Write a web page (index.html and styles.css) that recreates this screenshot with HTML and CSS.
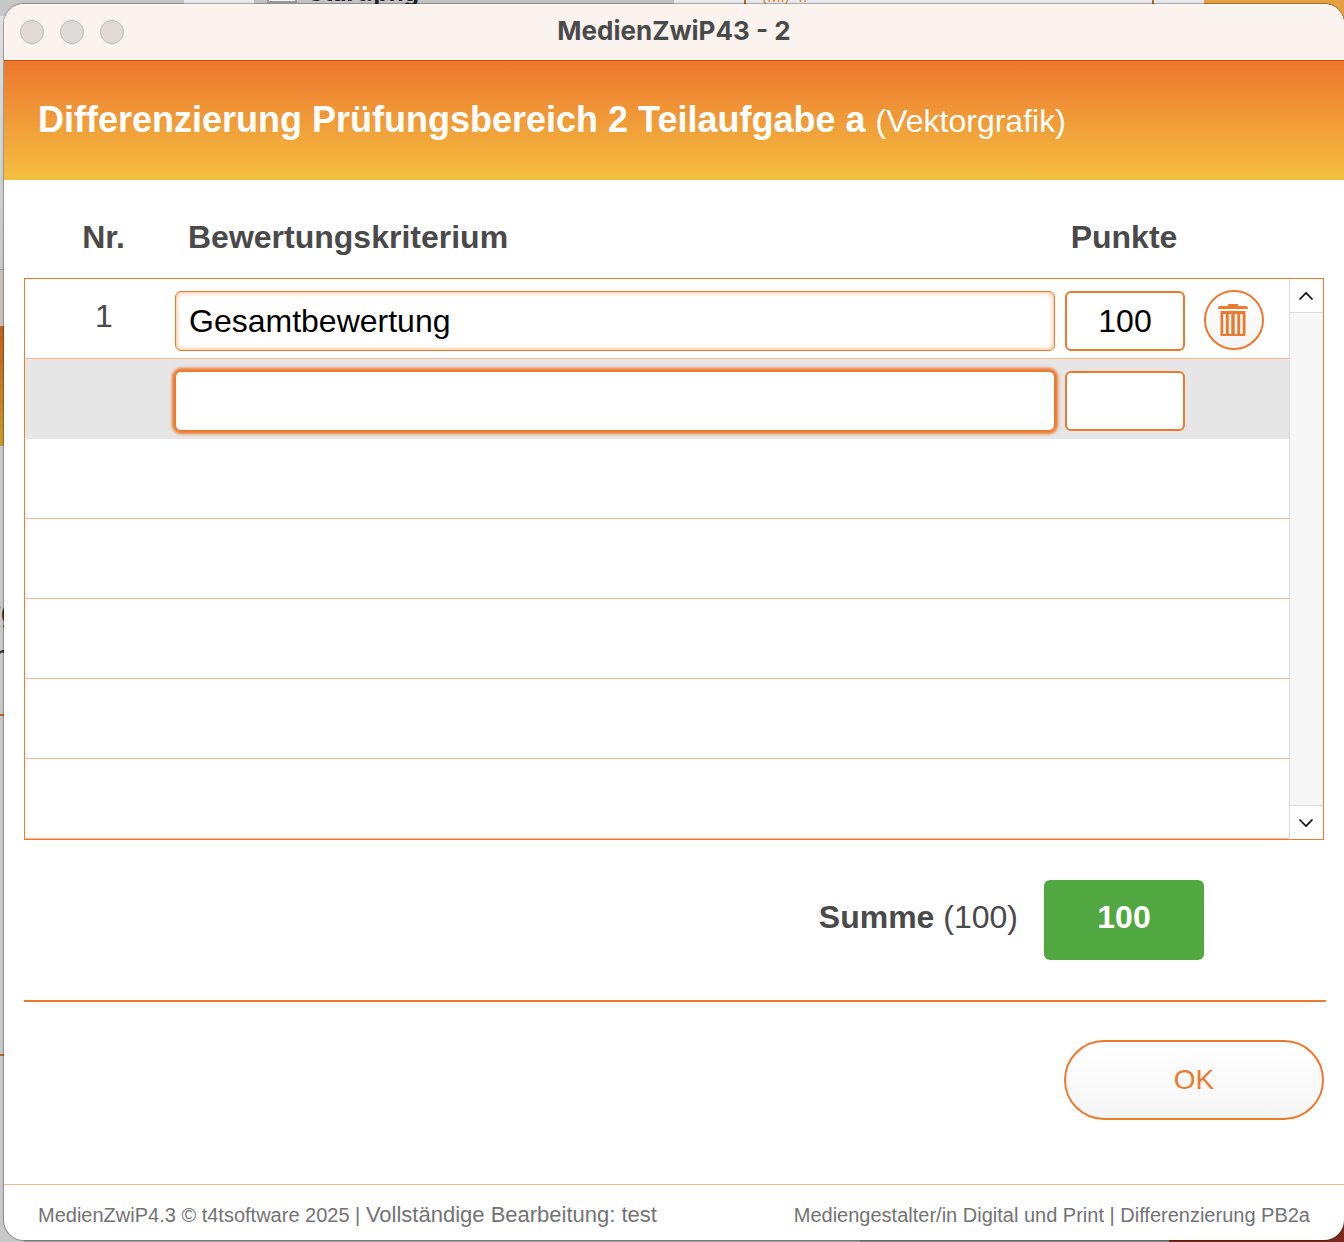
FILE: index.html
```html
<!DOCTYPE html>
<html lang="de">
<head>
    <meta charset="UTF-8">
    <meta name="viewport" content="width=device-width, initial-scale=1.0">
    <title>MedienZwiP43 - 2</title>
    <link rel="stylesheet" href="styles.css">
</head>
<body>
<div class="desktop-top" aria-hidden="true">
    <span class="desktop-icon"></span>
    <span class="desktop-file">Start.png</span>
    <span class="desktop-panel"></span>
    <span class="desktop-code">(Mi) &nbsp;f.</span>
</div>
<div class="desktop-left" aria-hidden="true">
    <span class="desktop-letter letter-g">rg</span>
    <span class="desktop-letter letter-r">r</span>
</div>

<div class="window">
    <div class="titlebar">
        <div class="lights"><span></span><span></span><span></span></div>
        <div class="window-title">MedienZwiP43 - 2</div>
    </div>

    <header class="banner">
        <h1>Differenzierung Prüfungsbereich 2 Teilaufgabe a <span>(Vektorgrafik)</span></h1>
    </header>

    <main>
        <table class="criteria">
            <thead>
            <tr>
                <th class="nr">Nr.</th>
                <th class="name">Bewertungskriterium</th>
                <th class="points">Punkte</th>
                <th class="action"></th>
                <th class="scroll"></th>
            </tr>
            </thead>
            <tbody>
            <tr>
                <td class="nr">1</td>
                <td class="name"><input type="text" class="field inset" value="Gesamtbewertung" aria-label="Bewertungskriterium 1"></td>
                <td class="points"><input type="text" class="field" value="100" aria-label="Punkte 1"></td>
                <td class="action">
                    <button type="button" class="delete" aria-label="Löschen">
                        <svg width="32" height="34" viewBox="0 0 32 34">
                            <path d="M11 3V1.500Q11 1 11.500 1H20.500Q21 1 21 1.500V3H29Q31 3 31 6H1Q1 3 3 3Z" fill="#ed792c"/>
                            <path d="M3.500 8H28.500V31.500Q28.500 33 27 33H5Q3.500 33 3.500 31.500Z" fill="#ed792c"/>
                            <path d="M7.500 11V31M13 11V31M19 11V31M24.500 11V31" stroke="#fcfcfc" stroke-width="2.500"/>
                        </svg>
                    </button>
                </td>
                <td class="scroll">
                    <button type="button" class="arrow up" aria-label="Nach oben">
                        <svg width="16" height="10" viewBox="0 0 16 10"><path d="M1.500 8.500L8 2L14.500 8.500" fill="none" stroke="#000" stroke-width="1.600"/></svg>
                    </button>
                </td>
            </tr>
            <tr class="current">
                <td class="nr"></td>
                <td class="name"><input type="text" class="field active" aria-label="Bewertungskriterium neu"></td>
                <td class="points"><input type="text" class="field" aria-label="Punkte neu"></td>
                <td class="action"></td>
                <td class="scroll"></td>
            </tr>
            <tr><td class="nr"></td><td></td><td></td><td></td><td class="scroll"></td></tr>
            <tr><td class="nr"></td><td></td><td></td><td></td><td class="scroll"></td></tr>
            <tr><td class="nr"></td><td></td><td></td><td></td><td class="scroll"></td></tr>
            <tr><td class="nr"></td><td></td><td></td><td></td><td class="scroll"></td></tr>
            <tr>
                <td class="nr"></td><td></td><td></td><td></td>
                <td class="scroll last">
                    <button type="button" class="arrow down" aria-label="Nach unten">
                        <svg width="16" height="10" viewBox="0 0 16 10"><path d="M1.500 1.500L8 8L14.500 1.500" fill="none" stroke="#000" stroke-width="1.600"/></svg>
                    </button>
                </td>
            </tr>
            </tbody>
        </table>

        <div class="sum">
            <div class="sum-label"><b>Summe</b> (100)</div>
            <output class="sum-value">100</output>
        </div>

        <div class="actions">
            <button type="button" class="ok">OK</button>
        </div>
    </main>

    <footer>
        <div>MedienZwiP4.3 © t4tsoftware 2025 | <span class="mode">Vollständige Bearbeitung: test</span></div>
        <div>Mediengestalter/in Digital und Print | Differenzierung PB2a</div>
    </footer>
</div>
</body>
</html>
```
FILE: styles.css
```css
* {
    box-sizing: border-box;
}
body {
    display: flex;
    min-height: 100vh;
    margin: 0;
    padding: 4px 0 2px 4px;
    font-family: Arial, "Liberation Sans", sans-serif;
    font-size: 32px;
    color: #4a4a4a;
    background: linear-gradient(to right, #a4a4a4 64%, #8c8c8c 64% 87%, #7b2b1b 87%);
}

/* what shows of the desktop behind the window */
.desktop-top {
    position: absolute;
    top: 0;
    left: 0;
    width: 100%;
    height: 30px;
    overflow: hidden;
    background: linear-gradient(to right, #c8c8c8 184px, #e9eaed 184px 254px, #c4c4c6 254px 674px, #e9eaed 674px 1204px, #e5a040 1204px);
}
.desktop-icon {
    position: absolute;
    top: -20px;
    left: 267px;
    width: 30px;
    height: 23px;
    border: 2px solid #999;
    background: #f4f4f4;
}
.desktop-file {
    position: absolute;
    top: -21px;
    left: 308px;
    font: bold 24px/28px Inter, sans-serif;
    color: #222;
}
.desktop-panel {
    position: absolute;
    top: 0;
    left: 744px;
    width: 410px;
    height: 10px;
    border: solid #b66a20;
    border-width: 0 2px;
}
.desktop-code {
    position: absolute;
    top: -13px;
    left: 762px;
    font-size: 16px;
    line-height: 20px;
    color: #d98b2b;
}
.desktop-left {
    position: absolute;
    top: 16px;
    bottom: 0;
    left: 0;
    width: 24px;
    overflow: hidden;
    background: linear-gradient(#e0e0e0, #c8c8c8 253px, #999 253px 254px, #c9c0ba 254px 310px, #c2601f 310px, #c89a30 430px, #c8c8c8 430px 698px, #c8601c 698px 700px, #c8c8c8 700px 1038px, #c8601c 1038px 1040px, #c8c8c8 1040px);
}
.desktop-letter {
    position: absolute;
    left: -10px;
    line-height: 32px;
    color: #333;
}
.letter-g {
    top: 580px;
}
.letter-r {
    left: -6px;
    top: 624px;
}

.window {
    position: relative;
    flex: 1;
    display: flex;
    flex-direction: column;
    border-radius: 20px;
    overflow: hidden;
    background: #fff;
    box-shadow: 0 0 1px 1px rgba(0, 0, 0, 0.3);
}
.titlebar {
    display: grid;
    grid-template-columns: 1fr auto 1fr;
    align-items: center;
    height: 57px;
    padding: 0 16px;
    background: #fbf3ee;
    border-bottom: 1px solid #c9500c;
}
.lights {
    display: flex;
    gap: 16px;
}
.lights span {
    width: 24px;
    height: 24px;
    border: 1px solid #bbb5b1;
    border-radius: 50%;
    background: #dfdad6;
}
.window-title {
    padding-bottom: 2px;
    font: bold 26px/32px Inter, sans-serif;
}
.banner {
    height: 119px;
    padding: 38px 34px;
    color: #fff;
    background: linear-gradient(#ed772f, #f4bf40);
}
h1 {
    margin: 0;
    font-size: 36px;
    line-height: 42px;
}
h1 span {
    font-size: 32px;
    font-weight: normal;
}
main {
    flex: 1;
    padding: 19px 20px 0;
}

.criteria {
    width: 100%;
    table-layout: fixed;
    border-spacing: 0;
}
.criteria th {
    height: 80px;
    padding: 0 0 2px;
    border-bottom: 1px solid #ed792c;
}
.criteria td {
    height: 80px;
    padding: 0;
    border-bottom: 1px solid #f7b78f;
    vertical-align: top;
}
.criteria .nr {
    width: 151px;
    padding-left: 8px;
    text-align: center;
}
.criteria td.nr {
    padding-top: 19px;
    border-left: 1px solid #ed792c;
}
.criteria th.name {
    padding-left: 13px;
    text-align: left;
}
.criteria .points {
    width: 130px;
}
.criteria th.points {
    padding-left: 8px;
}
.criteria .action {
    width: 104px;
}
.criteria .scroll {
    width: 35px;
}
.criteria td.name {
    padding-top: 12px;
}
.criteria td.points {
    padding: 12px 0 0 10px;
}
.criteria td.action {
    padding: 11px 0 0 19px;
}
.criteria td.scroll {
    border-left: 1px solid #dcdcdc;
    border-right: 1px solid #ed792c;
    border-bottom: 0;
    background: #f7f7f7;
}
.criteria td.last {
    vertical-align: bottom;
}
.criteria tbody tr:last-child td {
    height: 81px;
    border-bottom: 1px solid #ed792c;
    background-image: linear-gradient(to top, #f7b78f 1px, transparent 1px);
}
.criteria tbody tr:last-child td.last {
    background-image: none;
}
.criteria .current {
    background: #e6e6e6;
}
.criteria .current td {
    border-bottom-color: #e6e6e6;
}

.field {
    display: block;
    width: 100%;
    height: 60px;
    padding: 0 12px;
    border: 2px solid #ed792c;
    border-radius: 6px;
    outline: none;
    background: #fff;
    font: inherit;
    color: #000;
}
.points .field {
    text-align: center;
}
.inset {
    border-width: 1px;
    padding: 0 13px;
    box-shadow: inset 0 0 4px 1px #f5bd91;
}
.active {
    border-width: 1px;
    box-shadow: 0 0 3px 3px #ed792c;
}
.delete {
    display: flex;
    align-items: center;
    justify-content: center;
    width: 60px;
    height: 60px;
    padding: 0 2px 0 0;
    border: 2px solid #ed792c;
    border-radius: 50%;
    background: linear-gradient(#fff, #f5f5f5);
}
.arrow {
    display: flex;
    align-items: center;
    justify-content: center;
    width: 100%;
    height: 34px;
    padding: 0 1px 0 0;
    border: 0 solid #dcdcdc;
    background: #fff;
}
.up {
    border-bottom-width: 1px;
}
.down {
    border-top-width: 1px;
}

.sum {
    display: flex;
    justify-content: flex-end;
    gap: 26px;
    margin-right: -2px;
    padding: 40px 122px 40px 0;
    border-bottom: 2px solid #ed792c;
    line-height: 74px;
}
.sum-value {
    width: 160px;
    height: 80px;
    border-radius: 6px;
    background: #51a840;
    color: #fff;
    font-weight: bold;
    text-align: center;
}
.actions {
    display: flex;
    justify-content: flex-end;
    padding: 38px 0;
}
.ok {
    width: 260px;
    height: 80px;
    border: 2px solid #ed792c;
    border-radius: 40px;
    background: linear-gradient(#fff, #f5f5f5);
    font: 28px Arial, "Liberation Sans", sans-serif;
    color: #ed792c;
}
footer {
    display: flex;
    justify-content: space-between;
    height: 56px;
    padding: 0 34px;
    border-top: 1px solid #f7b78f;
    font-size: 20px;
    line-height: 60px;
    color: #737373;
}
.mode {
    font-size: 22px;
}
```
